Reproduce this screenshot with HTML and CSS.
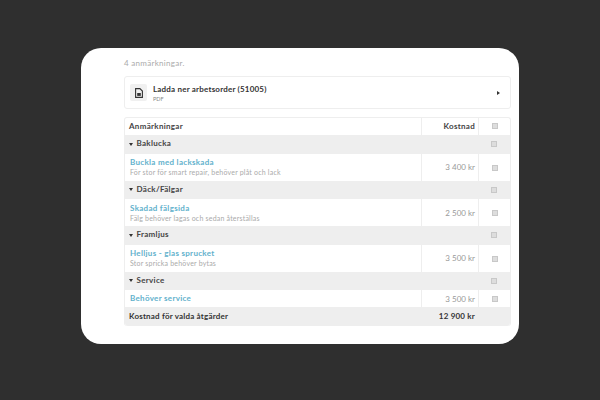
FILE: index.html
```html
<!DOCTYPE html>
<html lang="sv">
<head>
    <meta charset="UTF-8">
    <meta name="viewport" content="width=device-width, initial-scale=1.0">
    <title>Anmärkningar</title>
    <link rel="stylesheet" href="styles.css">
</head>
<body>
    <main class="card">
        <p class="count">4 anmärkningar.</p>

        <a class="download" href="#">
            <span class="file-icon">
                <svg width="8" height="10" viewBox="0 0 8 10" fill="none" stroke="#333" stroke-width="1.1">
                    <path d="M.6 .6h4.3l2.5 2.5v6.3h-6.8z"/>
                    <path d="M2.2 5h3.6v2.9h-3.6z" fill="#333" stroke="none"/>
                </svg>
            </span>
            <span class="download-text">
                <strong>Ladda ner arbetsorder (51005)</strong>
                <small>PDF</small>
            </span>
            <span class="arrow"></span>
        </a>

        <table class="remarks">
            <tr class="head">
                <th>Anmärkningar</th>
                <th class="cost">Kostnad</th>
                <td class="check"><span class="box"></span></td>
            </tr>
            <tr class="group">
                <td colspan="2"><span class="caret"></span>Baklucka</td>
                <td class="check"><span class="box"></span></td>
            </tr>
            <tr class="item">
                <td><a href="#">Buckla med lackskada</a><small>För stor för smart repair, behöver plåt och lack</small></td>
                <td class="cost">3 400 kr</td>
                <td class="check"><span class="box"></span></td>
            </tr>
            <tr class="group">
                <td colspan="2"><span class="caret"></span>Däck/Fälgar</td>
                <td class="check"><span class="box"></span></td>
            </tr>
            <tr class="item">
                <td><a href="#">Skadad fälgsida</a><small>Fälg behöver lagas och sedan återställas</small></td>
                <td class="cost">2 500 kr</td>
                <td class="check"><span class="box"></span></td>
            </tr>
            <tr class="group">
                <td colspan="2"><span class="caret"></span>Framljus</td>
                <td class="check"><span class="box"></span></td>
            </tr>
            <tr class="item">
                <td><a href="#">Helljus - glas sprucket</a><small>Stor spricka behöver bytas</small></td>
                <td class="cost">3 500 kr</td>
                <td class="check"><span class="box"></span></td>
            </tr>
            <tr class="group">
                <td colspan="2"><span class="caret"></span>Service</td>
                <td class="check"><span class="box"></span></td>
            </tr>
            <tr class="item single">
                <td><a href="#">Behöver service</a></td>
                <td class="cost">3 500 kr</td>
                <td class="check"><span class="box"></span></td>
            </tr>
            <tr class="total">
                <td>Kostnad för valda åtgärder</td>
                <td class="cost">12 900 kr</td>
                <td class="check"></td>
            </tr>
        </table>
    </main>
</body>
</html>
```

FILE: styles.css
```css
body {
    font-family: "Lato", sans-serif;
    background-color: #2f2f2f;
    margin: 0;
    padding: 48px 81px 0;
}

.card {
    box-sizing: border-box;
    width: 438px;
    height: 296px;
    padding: 12px 8px 0 43px;
    background-color: #fff;
    border-radius: 20px;
}

.count {
    margin: 0 0 9px;
    height: 7px;
    line-height: 7px;
    font-size: 8px;
    letter-spacing: .3px;
    color: #aaa;
}

/* Nedladdning */
.download {
    box-sizing: border-box;
    display: flex;
    align-items: center;
    height: 33px;
    padding: 0 10px 0 5px;
    border: 1px solid #eee;
    border-radius: 3px;
    color: #333;
    text-decoration: none;
}

.file-icon {
    display: flex;
    justify-content: center;
    align-items: center;
    width: 17px;
    height: 17px;
    background-color: #f0f0f0;
    border-radius: 2px;
}

.download-text {
    display: flex;
    flex-direction: column;
    flex: 1;
    margin-left: 6px;
}

.download-text strong {
    font-size: 8px;
    line-height: 12px;
    letter-spacing: .2px;
}

.download-text small {
    margin-top: 1px;
    font-size: 5.5px;
    line-height: 7px;
    color: #888;
}

.arrow {
    border-left: 3px solid #333;
    border-top: 2.5px solid transparent;
    border-bottom: 2.5px solid transparent;
}

/* Tabell */
.remarks {
    box-sizing: border-box;
    width: 387px;
    margin-top: 8px;
    border-collapse: separate;
    border-spacing: 0;
    table-layout: fixed;
    border: 1px solid #eee;
    border-bottom: 0;
    border-radius: 3px;
    font-size: 8px;
}

.remarks td,
.remarks th {
    box-sizing: border-box;
    padding: 0 4px;
    text-align: left;
}

.remarks .cost {
    width: 57px;
    padding-right: 3px;
    text-align: right;
    border-left: 1px solid #eee;
}

.remarks .check {
    width: 32px;
    padding: 0;
    text-align: center;
    border-left: 1px solid #eee;
}

.box {
    display: inline-block;
    box-sizing: border-box;
    width: 6px;
    height: 6px;
    vertical-align: middle;
    background-color: #ddd;
    border: 1px solid #c8c8c8;
}

.head {
    height: 17px;
}

.head th {
    color: #444;
    font-weight: 700;
    letter-spacing: .3px;
}

.remarks .head th,
.remarks .head td,
.remarks .group td {
    padding-bottom: 2px;
}

.group {
    height: 18.5px;
    background-color: #eee;
    color: #444;
    font-weight: 700;
    letter-spacing: .3px;
}

.group td,
.group .check {
    border-left: 0;
}

.caret {
    display: inline-block;
    margin-right: 3.5px;
    vertical-align: middle;
    border-top: 3px solid #333;
    border-left: 2.5px solid transparent;
    border-right: 2.5px solid transparent;
}

.item {
    height: 27px;
}

.item.single {
    height: 17px;
}

.remarks .item td:first-child {
    padding-left: 5px;
    padding-bottom: 1px;
}

.item a {
    display: block;
    font-size: 8px;
    line-height: 11px;
    font-weight: 700;
    letter-spacing: .3px;
    color: #62b1cc;
    text-decoration: none;
}

.item small {
    display: block;
    font-size: 7px;
    line-height: 8px;
    letter-spacing: .2px;
    color: #aaa;
}

.item .cost {
    color: #999;
}

.total {
    height: 18.5px;
    background-color: #eee;
    color: #333;
    font-weight: 700;
    letter-spacing: .2px;
}

.total td:first-child {
    border-bottom-left-radius: 3px;
}

.total .check {
    border-bottom-right-radius: 3px;
}
```
